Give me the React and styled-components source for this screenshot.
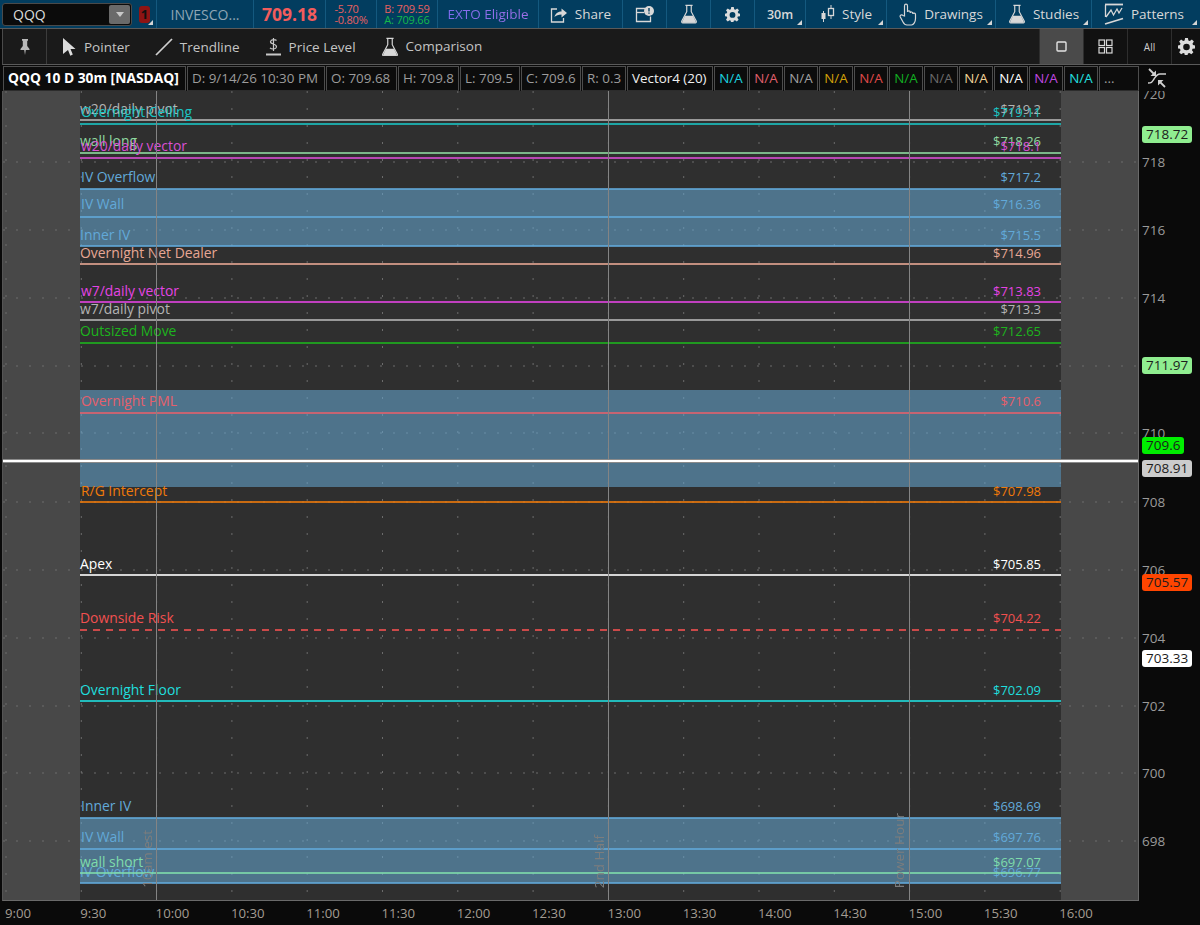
import React from "react";
import styled, { createGlobalStyle } from "styled-components";

const GlobalStyle = createGlobalStyle`
  html, body {
    margin: 0;
    padding: 0;
    background: #0a0a0a;
  }
  * {
    box-sizing: border-box;
  }
`;

const Page = styled.div`
  width: 1200px;
  height: 925px;
  display: flex;
  flex-direction: column;
  overflow: hidden;
  background: #0a0a0a;
  font-family: "Open Sans", "Liberation Sans", sans-serif;
  font-size: 13px;
  color: #c8c8c8;
`;

const TopBar = styled.div`
  height: 29px;
  flex: none;
  display: flex;
  background: #023d5f;
  border-bottom: 1px solid #5a5a5a;
`;

const BarCell = styled.div`
  position: relative;
  flex: none;
  width: ${(p) => p.$w}px;
  display: flex;
  align-items: center;
  justify-content: ${(p) => p.$align || "center"};
  gap: ${(p) => p.$gap || 7}px;
  padding-left: ${(p) => p.$pad || 0}px;
  border-right: ${(p) => (p.$last ? "none" : "1px solid #14597f")};
  color: #d8d8d8;
  font-size: 13.5px;
  white-space: nowrap;
  ${(p) =>
    p.$menu &&
    `&::after {
      content: "";
      position: absolute;
      right: 3px;
      bottom: 3px;
      border-style: solid;
      border-width: 0 0 5px 5px;
      border-color: transparent transparent #d5d5d5 transparent;
    }`}
`;

const SymbolCell = styled(BarCell)`
  padding-left: 2px;
  gap: 7px;
`;

const SymbolBox = styled.div`
  width: 130px;
  height: 23px;
  display: flex;
  align-items: center;
  justify-content: space-between;
  padding: 0 1px 0 10px;
  background: #0b0b0b;
  border: 1px solid #4a4a4a;
  border-radius: 3px;
  color: #dcdcdc;
  font-size: 14px;
`;

const DropButton = styled.div`
  width: 21px;
  height: 19px;
  display: flex;
  align-items: center;
  justify-content: center;
  background: #6a6a6a;
  border-radius: 2px;
  &::before {
    content: "";
    border-style: solid;
    border-width: 5px 4px 0 4px;
    border-color: #c8c8c8 transparent transparent transparent;
  }
`;

const LinkBadge = styled.div`
  width: 11px;
  height: 17px;
  background: #8e1414;
  border-radius: 3px;
  color: #101010;
  font-size: 13px;
  font-weight: 700;
  line-height: 17px;
  text-align: center;
`;

const CompanyName = styled.span`
  color: #8fa6b5;
  font-size: 14px;
`;

const LastPrice = styled.span`
  color: #f25c5c;
  font-size: 17.5px;
  font-weight: 700;
`;

const Stack = styled.div`
  display: flex;
  flex-direction: column;
  align-items: flex-start;
  font-size: 11px;
  line-height: 11px;
  letter-spacing: -0.2px;
`;

const Quote = styled.span`
  color: ${(p) => p.$color};
`;

const Exto = styled.span`
  font-size: 13.5px;
  background: linear-gradient(90deg, #7f6cf0, #a070e8);
  -webkit-background-clip: text;
  background-clip: text;
  color: transparent;
`;

const Interval = styled.span`
  font-size: 12.5px;
  font-weight: 600;
`;

const Toolbar = styled.div`
  height: 36px;
  flex: none;
  display: flex;
  align-items: stretch;
  margin-left: 2px;
  background: #1a1a1a;
  border-left: 1px solid #4a4a4a;
  border-bottom: 1px solid #5a5a5a;
`;

const PinCell = styled.div`
  width: 44px;
  display: flex;
  align-items: center;
  justify-content: center;
  border-right: 1px solid #3c3c3c;
`;

const Tools = styled.div`
  flex: 1;
  display: flex;
  align-items: center;
  gap: 25px;
  padding-left: 15px;
`;

const Tool = styled.div`
  display: flex;
  align-items: center;
  gap: 7px;
  color: #c4c4c4;
  font-size: 13.5px;
`;

const ViewCell = styled.div`
  flex: none;
  width: ${(p) => p.$w || 44}px;
  display: flex;
  align-items: center;
  justify-content: center;
  background: ${(p) => (p.$active ? "#4a4a4a" : "#111")};
  border-left: 1px solid #2e2e2e;
  color: #d0d0d0;
  font-size: 10px;
`;

const LegendRow = styled.div`
  height: 26px;
  flex: none;
  display: flex;
  align-items: stretch;
  gap: 1px;
  padding: 1px 0 0 3px;
  background: #0a0a0a;
`;

const LegendCell = styled.div`
  flex: none;
  width: ${(p) => p.$w}px;
  display: flex;
  align-items: center;
  padding-left: ${(p) => (p.$center ? 0 : 4)}px;
  padding-bottom: 2px;
  justify-content: ${(p) => (p.$center ? "center" : "flex-start")};
  background: #0c0c0c;
  border: 1px solid #4d4d4d;
  border-bottom-color: #2c2c2c;
  color: ${(p) => p.$color || "#9c9c9c"};
  font-size: ${(p) => (p.$bold ? 13.8 : 13.4)}px;
  font-weight: ${(p) => (p.$bold ? 700 : 400)};
  white-space: nowrap;
  overflow: hidden;
`;

const ScaleIcon = styled.div`
  flex: 1;
  display: flex;
  justify-content: flex-start;
  padding: 2px 0 0 7px;
`;

const ChartRow = styled.div`
  height: 810px;
  flex: none;
  display: flex;
`;

const Chart = styled.div`
  position: relative;
  width: 1137px;
  margin-left: 2px;
  flex: none;
  display: flex;
  background: #2f2f2f;
  border-left: 1px solid #555;
  border-right: 1px solid #6a6a6a;
  border-bottom: 1px solid #6a6a6a;
`;

const ExtHours = styled.div`
  flex: none;
  width: ${(p) => p.$w}px;
  background: #484848;
`;

const Session = styled.div`
  flex: 1;
`;

const GridLayer = styled.svg`
  position: absolute;
  left: 0;
  top: 0;
  width: 100%;
  height: 100%;
`;

const Band = styled.div.attrs((p) => ({ style: { top: p.$top, height: p.$h } }))`
  position: absolute;
  left: 77px;
  width: 981px;
  background: rgba(101, 165, 206, 0.58);
`;

const PriceLine = styled.div.attrs((p) => ({ style: { top: p.$top } }))`
  position: absolute;
  left: 77px;
  width: 981px;
  height: 2px;
  opacity: 0.8;
  background: ${(p) =>
    p.$dashed
      ? `repeating-linear-gradient(90deg, ${p.$color} 0 7px, transparent 7px 13px)`
      : p.$color};
`;

const LineName = styled.span.attrs((p) => ({ style: { top: p.$top, left: p.$left } }))`
  position: absolute;
  color: ${(p) => p.$color};
  font-size: 13.9px;
  line-height: 16px;
  white-space: nowrap;
`;

const LinePrice = styled.span.attrs((p) => ({ style: { top: p.$top } }))`
  position: absolute;
  right: 97px;
  color: ${(p) => p.$color};
  font-size: 13px;
  line-height: 16px;
`;

const SessionMark = styled.div.attrs((p) => ({ style: { left: p.$left } }))`
  position: absolute;
  top: 0;
  bottom: 0;
  width: 1px;
  background: #848484;
`;

const MarkName = styled.span.attrs((p) => ({ style: { left: p.$left } }))`
  position: absolute;
  bottom: 12px;
  writing-mode: vertical-rl;
  transform: rotate(180deg);
  color: #7d7d7d;
  font-size: 13.5px;
  line-height: 14px;
  white-space: nowrap;
`;

const LastLine = styled.div`
  position: absolute;
  left: 0;
  right: 0;
  top: 368px;
  height: 4px;
  background: #fff;
  border-top: 1px solid #8a8a8a;
  border-bottom: 1px solid #8a8a8a;
`;

const PriceAxis = styled.div`
  position: relative;
  flex: 1;
  overflow: hidden;
  background: #0a0a0a;
`;

const AxisTick = styled.span.attrs((p) => ({ style: { top: p.$top } }))`
  position: absolute;
  left: 3px;
  color: #9a9a9a;
  font-size: 13.5px;
  line-height: 16px;
`;

const PriceTag = styled.span.attrs((p) => ({ style: { top: p.$top } }))`
  position: absolute;
  left: 3px;
  height: 17px;
  padding: 0 4px;
  background: ${(p) => p.$bg};
  border-radius: 3px;
  color: #1c1c1c;
  font-size: 13.5px;
  line-height: 17px;
`;

const TimeAxis = styled.div`
  flex: 1;
  display: flex;
  padding-left: 5px;
  background: #0a0a0a;
`;

const TimeLabel = styled.span`
  flex: none;
  width: 75.3px;
  padding-top: 3px;
  color: #a39c92;
  font-size: 13.2px;
  line-height: 18px;
`;

const PinIcon = () => (
  <svg width="10" height="18" viewBox="0 0 10 18" fill="#b8b8b8">
    <path d="M2 1h6v1.500L7.200 3v5L9.500 11v1H5.800L5 17l-.8-5H.5v-1L2.800 8V3L2 2.500z" />
  </svg>
);

const PointerIcon = () => (
  <svg width="15" height="18" viewBox="0 0 15 18" fill="#dcdcdc">
    <path d="M1 0l12.500 11H8.500l2.300 5.500-2.500 1.300L6 12l-5 4z" />
  </svg>
);

const TrendIcon = () => (
  <svg width="18" height="18" viewBox="0 0 18 18" stroke="#d0d0d0" strokeWidth="1.700">
    <path d="M1 17L17 1" />
  </svg>
);

const DollarIcon = () => (
  <svg width="17" height="19" viewBox="0 0 17 19" fill="none" stroke="#c8c8c8">
    <path d="M11.500 3.500C10.500 2.500 6 2 5.500 4.700 5.200 7.500 11.800 6.500 11.500 10 11 12.500 6.500 12.500 5 10.800M8.500 1v13" strokeWidth="1.200" />
    <path d="M1 17.500h15" strokeWidth="2" />
  </svg>
);

const FlaskIcon = ({ size = 20, color = "#d8d8d8" }) => (
  <svg width={size} height={size * 1.1} viewBox="0 0 20 22" fill="none" stroke={color}>
    <path d="M6 1.500h8M7.500 1.500v7L2 19c-.5 1 .1 2 1 2h14c1 0 1.500-1 1-2L12.500 8.500v-7" strokeWidth="1.300" />
    <path d="M5.500 13h9l3 6.500c.2.700-.2 1.200-.8 1.200H3.300c-.6 0-1-.5-.8-1.200z" fill={color} stroke="none" />
  </svg>
);

const GearIcon = ({ size = 18 }) => (
  <svg width={size} height={size} viewBox="0 0 18 18">
    <path
      fill="#dcdcdc"
      fillRule="evenodd"
      d="M7.500 0h3l.5 2.600 1.500.6L14.700 1.700l2.100 2.100-1.500 2.200.6 1.500L18 8v3l-2.600.5-.6 1.500 1.500 2.200-2.100 2.100-2.200-1.500-1.500.6-.5 2.600h-3L7 16.400l-1.500-.6-2.200 1.500-2.100-2.100L2.700 13l-.6-1.500L0 11V8l2.100-.5.600-1.500-1.500-2.200 2.100-2.100 2.200 1.500L7 2.600zM9 6a3.500 3.500 0 1 0 0 7 3.500 3.500 0 0 0 0-7z"
    />
  </svg>
);

const ShareIcon = () => (
  <svg width="18" height="17" viewBox="0 0 18 17" fill="none" stroke="#d8d8d8" strokeWidth="1.300">
    <path d="M7 3H1.500v13h12v-4" />
    <path d="M4.500 11c1-4 4-5.500 7-5.500V2.500L17 7l-5.500 4.500V8.500c-3 0-5.500 1-7 2.500z" fill="#d8d8d8" stroke="none" />
  </svg>
);

const NewsIcon = () => (
  <svg width="19" height="17" viewBox="0 0 19 17" fill="none" stroke="#d8d8d8" strokeWidth="1.300">
    <path d="M10 2.500H1.500v13h14v-5" />
    <path d="M1.500 6.500H9" />
    <circle cx="14" cy="5" r="5" fill="#d8d8d8" stroke="none" />
    <path d="M14 2v3.500M14 6.500v1.200" stroke="#023d5f" strokeWidth="1.400" />
  </svg>
);

const CandleIcon = () => (
  <svg width="15" height="20" viewBox="0 0 15 20" fill="none" stroke="#d8d8d8">
    <path d="M3.500 7v11M11 1v14" />
    <rect x="1.500" y="9" width="4" height="6" fill="#d8d8d8" stroke="none" />
    <rect x="8.500" y="4.500" width="5" height="7" fill="#023d5f" strokeWidth="1.300" />
  </svg>
);

const HandIcon = () => (
  <svg width="18" height="23" viewBox="0 0 18 23" fill="none" stroke="#d8d8d8" strokeWidth="1.200">
    <path d="M5.500 13V3c0-2.400 3-2.400 3 0v6c0-1.500 2.700-1.500 2.700 0v1c0-1.400 2.600-1.400 2.600.2v.8c.2-1.200 2.700-1.200 2.700.5v4c0 3-1.800 6.500-4 6.500H8c-2 0-3-1-4-3L1.300 14c-.8-1.800 1.500-3 2.700-1.500z" />
  </svg>
);

const PatternIcon = () => (
  <svg width="20" height="23" viewBox="0 0 20 23" fill="none" stroke="#d8d8d8" strokeWidth="1.300">
    <path d="M1 1.500h18" strokeWidth="1.800" />
    <path d="M1.500 2v12" />
    <path d="M2 14l5-7 2.500 5L13 6l2 4 3-5" />
    <path d="M1 21L19 15.500" strokeWidth="1.800" />
  </svg>
);

const SingleIcon = () => (
  <svg width="11" height="11" viewBox="0 0 11 11" fill="none" stroke="#e4e4e4" strokeWidth="1.400">
    <rect x="1" y="1" width="9" height="9" rx="1" />
  </svg>
);

const GridIcon = () => (
  <svg width="15" height="15" viewBox="0 0 15 15" fill="none" stroke="#d8d8d8" strokeWidth="1.200">
    <rect x="1" y="1" width="5.500" height="5.500" />
    <rect x="8.500" y="1" width="5.500" height="5.500" />
    <rect x="1" y="8.500" width="5.500" height="5.500" />
    <rect x="8.500" y="8.500" width="5.500" height="5.500" />
  </svg>
);

const ScaleGlyph = () => (
  <svg width="20" height="20" viewBox="0 0 20 20" fill="none" stroke="#d0d0d0" strokeWidth="1.400">
    <path d="M1 15c4 0 4-1 6-4s3-5 6-5h6" />
    <path d="M2 1l5 5" strokeWidth="1.800" />
    <path d="M9 8V2.500L3.500 8z" fill="#d0d0d0" stroke="none" />
    <path d="M18 19l-5-5" strokeWidth="1.800" />
    <path d="M11 12v5.500l5.500-5.500z" fill="#d0d0d0" stroke="none" />
  </svg>
);

const CHART_TOP = 91;
const CHART_LEFT = 3;

const LINES = [
  { name: "w20/daily pivot", price: "$719.2", color: "#b4b4b4", y: 120, ly: 109 },
  { name: "Overnight Ceiling", price: "$719.11", color: "#1ac4c4", y: 124, ly: 112, x: 81 },
  { name: "wall long", price: "$718.26", color: "#8fd9a0", y: 152.500, ly: 141 },
  { name: "w20/daily vector", price: "$718.1", color: "#d94fd4", y: 157.500, ly: 146, x: 81 },
  { name: "IV Overflow", price: "$717.2", color: "#62a9d9", y: 189, ly: 177, x: 81 },
  { name: "IV Wall", price: "$716.36", color: "#62a9d9", y: 216.500, ly: 204, x: 81 },
  { name: "Inner IV", price: "$715.5", color: "#62a9d9", y: 246, ly: 235 },
  { name: "Overnight Net Dealer", price: "$714.96", color: "#e7a794", y: 264, ly: 253 },
  { name: "w7/daily vector", price: "$713.83", color: "#e544e4", y: 302, ly: 291, x: 81 },
  { name: "w7/daily pivot", price: "$713.3", color: "#b4b4b4", y: 320, ly: 309 },
  { name: "Outsized Move", price: "$712.65", color: "#1db41d", y: 343, ly: 331 },
  { name: "Overnight PML", price: "$710.6", color: "#e5606c", y: 413, ly: 401, x: 81 },
  { name: "R/G Intercept", price: "$707.98", color: "#f07a0a", y: 502, ly: 491, x: 81 },
  { name: "Apex", price: "$705.85", color: "#ffffff", y: 575, ly: 564 },
  { name: "Downside Risk", price: "$704.22", color: "#f25050", y: 630, ly: 618, dashed: true },
  { name: "Overnight Floor", price: "$702.09", color: "#1fdede", y: 701, ly: 690 },
  { name: "Inner IV", price: "$698.69", color: "#62a9d9", y: 818, ly: 806, x: 81 },
  { name: "IV Wall", price: "$697.76", color: "#62a9d9", y: 849, ly: 837, x: 81 },
  { name: "IV Overflow", price: "$696.77", color: "#62a9d9", y: 883, ly: 872 },
  { name: "wall short", price: "$697.07", color: "#7fdcab", y: 873, ly: 862 },
];

const BANDS = [
  { top: 189, bottom: 246 },
  { top: 390, bottom: 487 },
  { top: 818, bottom: 883 },
];

const NA_COLORS = [
  "#1ad4e0", "#e0606e", "#a2a2a2", "#d4a208", "#e04a4a", "#12b022",
  "#6a6a6a", "#f2d49a", "#ffffff", "#c048e0", "#22e0e0",
];

const AXIS_TICKS = [
  ["720", 94], ["718", 162], ["716", 230], ["714", 298], ["712", 366], ["710", 433],
  ["708", 502], ["706", 570], ["704", 638], ["702", 706], ["700", 773], ["698", 841],
];

const TAGS = [
  ["718.72", 134, "#90ee90"],
  ["711.97", 365, "#90ee90"],
  ["709.6", 445, "#00ee00"],
  ["708.91", 468, "#cccccc"],
  ["705.57", 582, "#ff4500"],
  ["703.33", 658, "#ffffff"],
];

const TIMES = [
  "9:00", "9:30", "10:00", "10:30", "11:00", "11:30", "12:00", "12:30", "13:00",
  "13:30", "14:00", "14:30", "15:00", "15:30", "16:00",
];

const PRICE_GRID = [162, 230, 298, 366, 433, 502, 570, 638, 706, 773, 841];

const ChartGrid = () => (
  <GridLayer>
    {TIMES.map((t, i) => {
      const x = 3 + 75.3 * i;
      return <line key={t} x1={x} x2={x} y1="0" y2="809" stroke="#6c6c6c" strokeDasharray="2 15" />;
    })}
    {PRICE_GRID.map((y) => (
      <line key={y} x1="0" x2="1136" y1={y - CHART_TOP} y2={y - CHART_TOP} stroke="#6c6c6c" strokeDasharray="2 11" />
    ))}
  </GridLayer>
);

export default function App() {
  return (
    <Page>
      <GlobalStyle />
      <TopBar>
        <SymbolCell $w={157} $align="flex-start" $menu>
          <SymbolBox>
            QQQ
            <DropButton />
          </SymbolBox>
          <LinkBadge>1</LinkBadge>
        </SymbolCell>
        <BarCell $w={97}>
          <CompanyName>INVESCO...</CompanyName>
        </BarCell>
        <BarCell $w={72}>
          <LastPrice>709.18</LastPrice>
        </BarCell>
        <BarCell $w={51}>
          <Stack>
            <Quote $color="#e86060">-5.70</Quote>
            <Quote $color="#e86060">-0.80%</Quote>
          </Stack>
        </BarCell>
        <BarCell $w={61}>
          <Stack>
            <Quote $color="#e86060">B: 709.59</Quote>
            <Quote $color="#16b84a">A: 709.66</Quote>
          </Stack>
        </BarCell>
        <BarCell $w={101}>
          <Exto>EXTO Eligible</Exto>
        </BarCell>
        <BarCell $w={84}>
          <ShareIcon />
          Share
        </BarCell>
        <BarCell $w={44}>
          <NewsIcon />
        </BarCell>
        <BarCell $w={44}>
          <FlaskIcon size={18} />
        </BarCell>
        <BarCell $w={44}>
          <GearIcon size={15} />
        </BarCell>
        <BarCell $w={51} $menu>
          <Interval>30m</Interval>
        </BarCell>
        <BarCell $w={81} $menu>
          <CandleIcon />
          Style
        </BarCell>
        <BarCell $w={109} $menu>
          <HandIcon />
          Drawings
        </BarCell>
        <BarCell $w={96} $menu>
          <FlaskIcon size={18} />
          Studies
        </BarCell>
        <BarCell $w={108} $menu $last $align="flex-start" $pad={12}>
          <PatternIcon />
          Patterns
        </BarCell>
      </TopBar>

      <Toolbar>
        <PinCell>
          <PinIcon />
        </PinCell>
        <Tools>
          <Tool>
            <PointerIcon />
            Pointer
          </Tool>
          <Tool>
            <TrendIcon />
            Trendline
          </Tool>
          <Tool>
            <DollarIcon />
            Price Level
          </Tool>
          <Tool>
            <FlaskIcon size={18} />
            Comparison
          </Tool>
        </Tools>
        <ViewCell $active>
          <SingleIcon />
        </ViewCell>
        <ViewCell>
          <GridIcon />
        </ViewCell>
        <ViewCell>All</ViewCell>
        <ViewCell $w={29}>
          <GearIcon size={17} />
        </ViewCell>
      </Toolbar>

      <LegendRow>
        <LegendCell $w={183} $bold $color="#fff">QQQ 10 D 30m [NASDAQ]</LegendCell>
        <LegendCell $w={138}>D: 9/14/26 10:30 PM</LegendCell>
        <LegendCell $w={71}>O: 709.68</LegendCell>
        <LegendCell $w={61}>H: 709.8</LegendCell>
        <LegendCell $w={60}>L: 709.5</LegendCell>
        <LegendCell $w={60}>C: 709.6</LegendCell>
        <LegendCell $w={44}>R: 0.3</LegendCell>
        <LegendCell $w={86} $color="#f0f0f0">Vector4 (20)</LegendCell>
        {NA_COLORS.map((c, i) => (
          <LegendCell key={i} $w={34} $center $color={c}>N/A</LegendCell>
        ))}
        <LegendCell $w={40}>...</LegendCell>
        <ScaleIcon>
          <ScaleGlyph />
        </ScaleIcon>
      </LegendRow>

      <ChartRow>
        <Chart>
          <ExtHours $w={77} />
          <Session />
          <ExtHours $w={77} />
          <ChartGrid />
          {BANDS.map((b) => (
            <Band key={b.top} $top={b.top - CHART_TOP} $h={b.bottom - b.top} />
          ))}
          {LINES.map((l) => (
            <React.Fragment key={l.price}>
              <PriceLine $top={Math.round(l.y - CHART_TOP - 1)} $color={l.color} $dashed={l.dashed} />
              <LineName $top={l.ly - CHART_TOP - 8} $left={(l.x || 80) - CHART_LEFT} $color={l.color}>
                {l.name}
              </LineName>
              <LinePrice $top={l.ly - CHART_TOP - 8} $color={l.color}>
                {l.price}
              </LinePrice>
            </React.Fragment>
          ))}
          <SessionMark $left={153} />
          <SessionMark $left={605} />
          <SessionMark $left={906} />
          <MarkName $left={137}>10am est</MarkName>
          <MarkName $left={589}>2nd Half</MarkName>
          <MarkName $left={889}>Power Hour</MarkName>
          <LastLine />
        </Chart>
        <PriceAxis>
          {AXIS_TICKS.map(([t, y]) => (
            <AxisTick key={t} $top={y - CHART_TOP - 8}>{t}</AxisTick>
          ))}
          {TAGS.map(([t, y, bg]) => (
            <PriceTag key={t} $top={y - CHART_TOP - 8} $bg={bg}>{t}</PriceTag>
          ))}
        </PriceAxis>
      </ChartRow>

      <TimeAxis>
        {TIMES.map((t) => (
          <TimeLabel key={t}>{t}</TimeLabel>
        ))}
      </TimeAxis>
    </Page>
  );
}
